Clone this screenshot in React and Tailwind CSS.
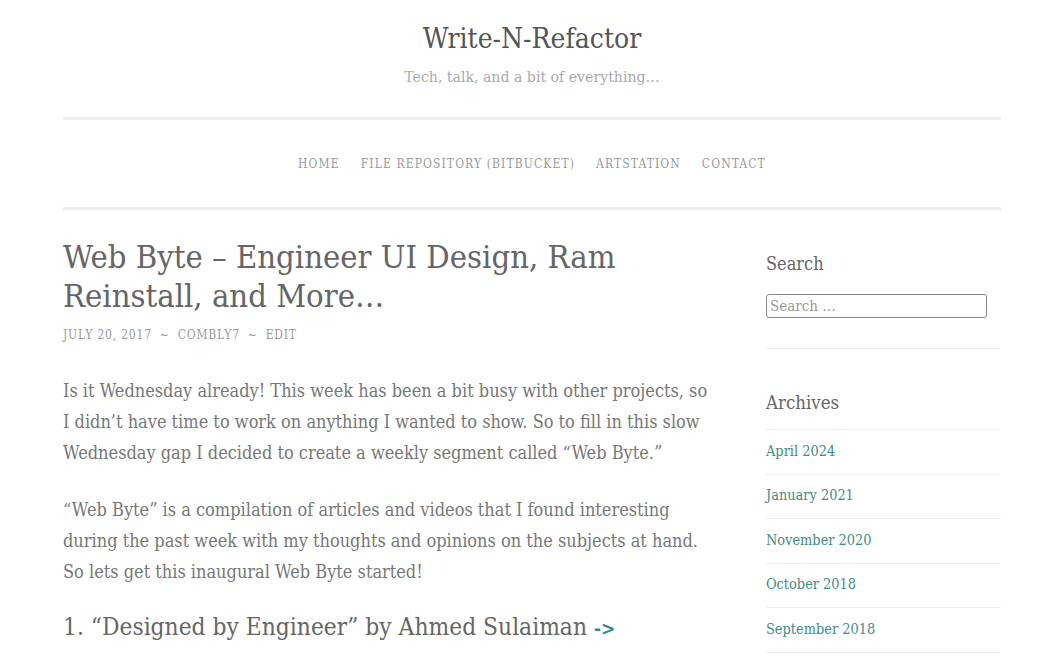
import React from "react";

const slab = { fontFamily: '"DejaVu Serif Condensed", "DejaVu Serif", serif' };

const navItems = ["Home", "File Repository (Bitbucket)", "ArtStation", "Contact"];

const archives = [
  "April 2024",
  "January 2021",
  "November 2020",
  "October 2018",
  "September 2018",
];

export default function App() {
  return (
    <div className="min-h-[666px] bg-white text-[#777]" style={slab}>
      <div className="w-[938px] mx-auto">
        <header className="pt-[21px] pb-[29px] text-center">
          <h1 className="text-[28px] leading-[36px] text-[#555] font-light">Write-N-Refactor</h1>
          <p className="mt-[9px] text-[15.7px] leading-[22px] text-[#aaa] font-light">
            Tech, talk, and a bit of everything…
          </p>
        </header>

        <nav className="border-y-[3px] border-[#eee] h-[93px] flex items-center justify-center gap-[21px]">
          {navItems.map((item) => (
            <a
              key={item}
              href="#"
              className="text-[12px] uppercase tracking-[1.1px] text-[#999]"
            >
              {item}
            </a>
          ))}
        </nav>

        <div className="flex pt-[28px]">
          <main className="w-[652px]">
            <h2 className="text-[32.5px] leading-[39px] text-[#666]">
              Web Byte – Engineer UI Design, Ram Reinstall, and More…
            </h2>
            <div className="mt-[10px] text-[12px] uppercase tracking-[0.8px] text-[#999] flex gap-[8px]">
              <span>July 20, 2017</span>
              <span>~</span>
              <span>Combly7</span>
              <span>~</span>
              <span>Edit</span>
            </div>

            <p className="mt-[31px] text-[18px] leading-[31px] text-[#777]">
              Is it Wednesday already! This week has been a bit busy with other projects, so I
              didn’t have time to work on anything I wanted to show. So to fill in this slow
              Wednesday gap I decided to create a weekly segment called “Web Byte.”
            </p>
            <p className="mt-[26px] text-[18px] leading-[31px] text-[#777]">
              “Web Byte” is a compilation of articles and videos that I found interesting during
              the past week with my thoughts and opinions on the subjects at hand. So lets get
              this inaugural Web Byte started!
            </p>
            <h3 className="mt-[24px] text-[24.3px] leading-[32px] text-[#666]">
              1. “Designed by Engineer” by Ahmed Sulaiman{" "}
              <a href="#" className="text-[19px] font-bold text-[#2b8a85]">
                -&gt;
              </a>
            </h3>
          </main>

          <aside className="w-[235px] ml-auto">
            <h4 className="text-[18px] leading-[24px] text-[#666] mt-[14px]">Search</h4>
            <input
              type="text"
              placeholder="Search …"
              className="mt-[18px] w-[221px] h-[24px] border border-[#888] rounded-[3px] px-[3px] text-[15px] placeholder:text-[#999]"
              style={slab}
            />
            <div className="mt-[30px] border-t border-[#eee]" />

            <h4 className="mt-[42px] text-[18.5px] leading-[24px] text-[#666]">Archives</h4>
            <ul className="mt-[14px]">
              {archives.map((month) => (
                <li key={month} className="border-t border-[#eee] h-[44.5px] flex items-center">
                  <a href="#" className="text-[14.4px] text-[#3f8c87]">
                    {month}
                  </a>
                </li>
              ))}
              <li className="border-t border-[#eee]" />
            </ul>
          </aside>
        </div>
      </div>
    </div>
  );
}
